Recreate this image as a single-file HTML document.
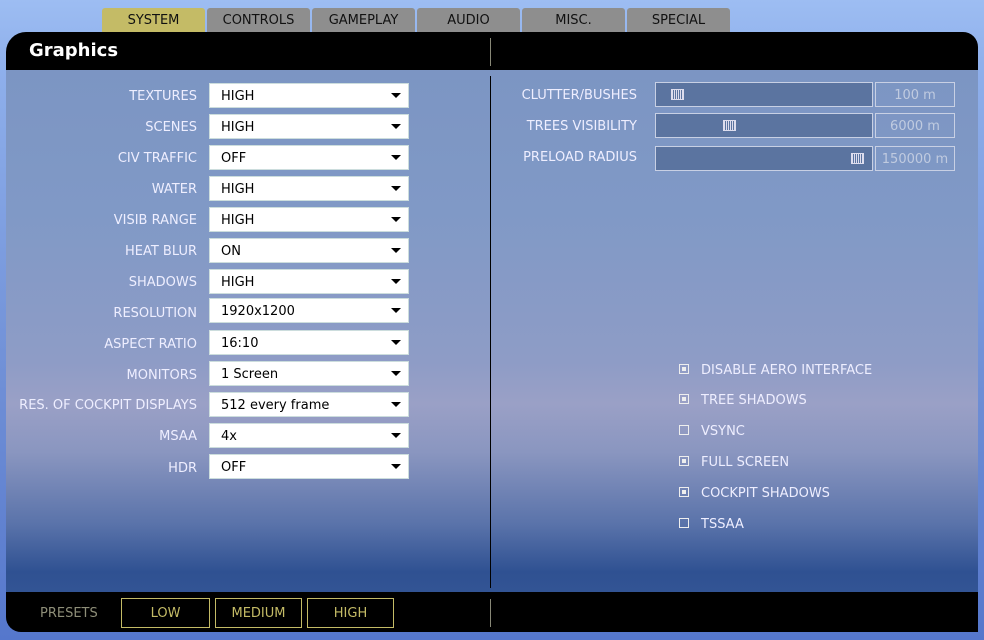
<!DOCTYPE html><html><head><style>
body{margin:0;width:984px;height:640px;overflow:hidden;position:relative;font-family:"DejaVu Sans","Liberation Sans",sans-serif;
background:linear-gradient(180deg,#9dbdf2 0%,#8fb0ec 10%,#6f8fd6 60%,#5577cc 100%);}
.tab{position:absolute;top:8px;height:24px;width:103px;background:#8e8e8e;border-radius:3px 3px 0 0;font-size:13px;line-height:22px;padding-top:2px;box-sizing:border-box;text-align:center;color:#111}
.panel{position:absolute;left:6px;top:32px;width:972px;height:600px;border-radius:20px 15px 0 15px;overflow:hidden;
background:linear-gradient(180deg,#7b94c2 0%,#8099c6 30%,#8e9cc6 55%,#9aa0c6 62%,#8a96c0 70%,#5a73aa 82%,#2f5192 90%,#3a5a98 100%)}
.hdr{position:absolute;left:0;top:0;width:972px;height:38px;background:#000}
.ftr{position:absolute;left:0;top:560px;width:972px;height:40px;background:#000}
.lbl{position:absolute;right:787px;font-size:13px;color:#eef;white-space:nowrap;margin-top:2px}
.dd{position:absolute;left:209px;background:#fff;border:1px solid #cdd;font-size:13px;line-height:25px;color:#000;box-sizing:border-box;padding-left:11px;width:200px;height:25px}
.dd:after{content:"";position:absolute;right:7px;top:9px;border-left:5px solid transparent;border-right:5px solid transparent;border-top:5px solid #000}
.sl{position:absolute;left:655px;width:218px;height:25px;box-sizing:border-box;border:1px solid #c8d0e4;background:#5b74a0}
.th{position:absolute;top:6px;width:13px;height:11px;border:1px solid #dde;box-sizing:border-box;background:repeating-linear-gradient(90deg,#dde 0 1px,transparent 1px 2px)}
.vb{position:absolute;left:875px;width:80px;height:25px;box-sizing:border-box;border:1px solid #c8d0e4;color:#c0cbe0;font-size:13px;text-align:center;line-height:26px}
.sll{position:absolute;font-size:13px;color:#eef;right:347px;margin-top:2px}
.cb{position:absolute;left:679px;width:10px;height:10px;border:1px solid #eee;box-sizing:border-box}
.cb.on:after{content:"";position:absolute;left:2px;top:2px;width:4px;height:4px;background:#eee}
.ct{position:absolute;left:701px;font-size:13px;color:#eef;margin-top:2px}
.pb{position:absolute;top:598px;height:30px;border:1px solid #c4bb66;box-sizing:border-box;color:#c4bb66;font-size:13px;text-align:center;line-height:30px}
</style></head><body>
<div class="tab" style="left:102px;background:#c4bb66">SYSTEM</div>
<div class="tab" style="left:207px">CONTROLS</div>
<div class="tab" style="left:312px">GAMEPLAY</div>
<div class="tab" style="left:417px">AUDIO</div>
<div class="tab" style="left:522px">MISC.</div>
<div class="tab" style="left:627px">SPECIAL</div>
<div class="panel"><div class="hdr"></div><div class="ftr"></div>
<div style="position:absolute;left:484px;top:6px;width:1px;height:28px;background:#887"></div>
<div style="position:absolute;left:484px;top:44px;width:1px;height:512px;background:#000"></div>
<div style="position:absolute;left:484px;top:567px;width:1px;height:28px;background:#887"></div>
</div>
<div style="position:absolute;left:29px;top:40px;color:#fff;font-weight:bold;font-size:18px">Graphics</div>

<div class="lbl" style="top:87px">TEXTURES</div><div class="dd" style="top:83px">HIGH</div>
<div class="lbl" style="top:118px">SCENES</div><div class="dd" style="top:114px">HIGH</div>
<div class="lbl" style="top:149px">CIV TRAFFIC</div><div class="dd" style="top:145px">OFF</div>
<div class="lbl" style="top:180px">WATER</div><div class="dd" style="top:176px">HIGH</div>
<div class="lbl" style="top:211px">VISIB RANGE</div><div class="dd" style="top:207px">HIGH</div>
<div class="lbl" style="top:242px">HEAT BLUR</div><div class="dd" style="top:238px">ON</div>
<div class="lbl" style="top:273px">SHADOWS</div><div class="dd" style="top:269px">HIGH</div>
<div class="lbl" style="top:304px">RESOLUTION</div><div class="dd" style="top:298px">1920x1200</div>
<div class="lbl" style="top:335px">ASPECT RATIO</div><div class="dd" style="top:330px">16:10</div>
<div class="lbl" style="top:366px">MONITORS</div><div class="dd" style="top:361px">1 Screen</div>
<div class="lbl" style="top:396px">RES. OF COCKPIT DISPLAYS</div><div class="dd" style="top:392px">512 every frame</div>
<div class="lbl" style="top:427px">MSAA</div><div class="dd" style="top:423px">4x</div>
<div class="lbl" style="top:459px">HDR</div><div class="dd" style="top:454px">OFF</div>

<div class="sll" style="top:86px">CLUTTER/BUSHES</div>
<div class="sl" style="top:82px"><div class="th" style="left:15px"></div></div><div class="vb" style="top:82px">100 m</div>
<div class="sll" style="top:117px">TREES VISIBILITY</div>
<div class="sl" style="top:113px"><div class="th" style="left:67px"></div></div><div class="vb" style="top:113px">6000 m</div>
<div class="sll" style="top:148px">PRELOAD RADIUS</div>
<div class="sl" style="top:146px"><div class="th" style="left:195px"></div></div><div class="vb" style="top:146px">150000 m</div>

<div class="cb on" style="top:364px"></div><div class="ct" style="top:361px">DISABLE AERO INTERFACE</div>
<div class="cb on" style="top:394px"></div><div class="ct" style="top:391px">TREE SHADOWS</div>
<div class="cb" style="top:425px"></div><div class="ct" style="top:422px">VSYNC</div>
<div class="cb on" style="top:456px"></div><div class="ct" style="top:453px">FULL SCREEN</div>
<div class="cb on" style="top:487px"></div><div class="ct" style="top:484px">COCKPIT SHADOWS</div>
<div class="cb" style="top:518px"></div><div class="ct" style="top:515px">TSSAA</div>

<div style="position:absolute;left:40px;top:606px;color:#8e8e78;font-size:13px">PRESETS</div>
<div class="pb" style="left:121px;width:89px">LOW</div>
<div class="pb" style="left:215px;width:87px">MEDIUM</div>
<div class="pb" style="left:307px;width:87px">HIGH</div>
</body></html>
